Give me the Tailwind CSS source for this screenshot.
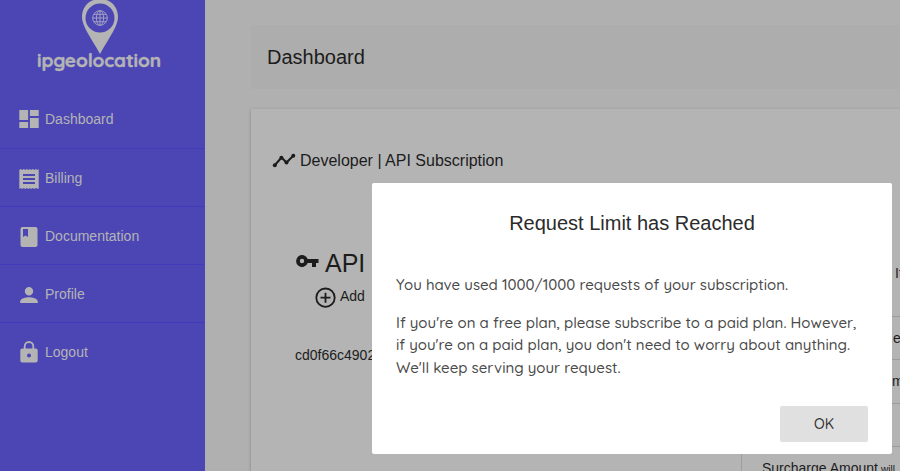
<!DOCTYPE html>
<html lang="en">
<head>
<meta charset="utf-8">
<title>Dashboard</title>
<script src="https://cdn.jsdelivr.net/npm/@tailwindcss/browser@4"></script>
</head>
<body class="relative flex h-[471px] w-[900px] overflow-hidden bg-[#b0b0b0] font-['Liberation_Sans',sans-serif] text-[#1c1c1c]">
<aside class="flex h-[471px] w-[205px] shrink-0 flex-col bg-[#4c46b5] text-[#b4b4b4]">
  <div class="flex h-[90px] shrink-0 flex-col items-center pr-[7px]">
    <svg class="block h-[54px] w-[40px] shrink-0 translate-x-[1px]" viewBox="0 0 40 54" fill="none">
      <path fill="#b4b4b4" fill-rule="evenodd" d="M20-1C9-1 2 7 2 17c0 9 8 19 18 37 10-18 18-28 18-37C38 7 31-1 20-1Zm0 4.500a14.500 14.500 0 1 1 0 29 14.500 14.500 0 0 1 0-29Z"/>
      <g stroke="#a09fc0" stroke-width="1"><circle cx="20" cy="18" r="7.300"/><ellipse cx="20" cy="18" rx="3.600" ry="7.300"/><path d="M20 10.700v14.600M12.700 18h14.600M14 14.300h12M14 21.700h12"/></g>
    </svg>
    <div class="-mt-[5px] whitespace-nowrap font-['Quicksand',sans-serif] text-[19px] leading-[22px] font-bold tracking-[-0.100px] [-webkit-text-stroke:0.400px_#b4b4b4]">ipgeolocation</div>
  </div>
  <nav class="flex flex-col text-[14px]">
    <a class="flex h-[59px] items-center gap-[4px] border-b border-[#413abb] pl-[17px]"><svg class="size-6" viewBox="0 0 24 24" fill="currentColor"><path d="M2.300 3h8.800v10H2.300zm0 12h8.800v6H2.300zM12.900 11h8.800v10h-8.800zm0-8h8.800v6h-8.800z"/></svg><span>Dashboard</span></a>
    <a class="flex h-[58px] items-center gap-[4px] border-b border-[#413abb] pt-[2px] pl-[17px]"><svg class="size-6" viewBox="0 0 24 24" fill="currentColor"><path d="M18 17H6v-2h12v2zm0-4H6v-2h12v2zm0-4H6V7h12v2zM2.300 22l1.500-1L5.300 22l1.500-1L8.300 22l1.500-1L11.300 22l1.500-1L14.300 22l1.500-1L17.300 22l1.500-1L21.700 22V2l-1.400 1L18.800 2l-1.500 1L15.800 2l-1.500 1L12.800 2l-1.500 1L9.800 2 8.300 3 6.800 2 5.300 3 3.800 2 2.300 3z"/></svg><span>Billing</span></a>
    <a class="flex h-[58px] items-center gap-[4px] border-b border-[#413abb] pt-[2px] pl-[17px]"><svg class="size-6" viewBox="0 0 24 24" fill="currentColor"><path d="M18.500 2h-13C4.400 2 3.500 2.900 3.500 4v16c0 1.100.900 2 2 2h13c1.100 0 2-.900 2-2V4c0-1.100-.900-2-2-2zM6 4h5v8l-2.500-1.500L6 12V4z"/></svg><span>Documentation</span></a>
    <a class="flex h-[58px] items-center gap-[4px] border-b border-[#413abb] pt-[2px] pl-[17px]"><svg class="size-6" viewBox="0 0 24 24" fill="currentColor"><path d="M12 12.500c2.200 0 4.200-1.800 4.200-4.200S14.200 4 12 4 7.800 5.900 7.800 8.300s2 4.200 4.200 4.200zm0 1.700c-3 0-8.800 1.300-8.800 4.200V20h17.600v-1.600c0-2.900-5.800-4.200-8.800-4.200z"/></svg><span>Profile</span></a>
    <a class="flex h-[58px] items-center gap-[4px] pl-[17px]"><svg class="size-6" viewBox="0 0 24 24" fill="currentColor"><path d="M18.700 8.500h-1.500V6.300a5.200 5.200 0 0 0-10.400 0v2.200H5.300c-1.100 0-2 .900-2 2v9.900c0 1.100.900 2 2 2h13.400c1.100 0 2-.900 2-2v-9.900c0-1.100-.900-2-2-2zM12 17.400a2 2 0 1 1 0-4 2 2 0 0 1 0 4zm3.400-8.900H8.600V6.300a3.400 3.400 0 0 1 6.800 0v2.200z"/></svg><span>Logout</span></a>
  </nav>
</aside>
<main class="flex min-w-0 flex-1 flex-col overflow-hidden pt-[25px] pl-[46px]">
  <header class="flex h-[64px] shrink-0 items-center bg-[#adadad] pl-[16px] text-[20px]">Dashboard</header>
  <section class="mt-[20px] flex h-[380px] w-[700px] shrink-0 bg-[#b4b4b4] shadow-[0_1px_3px_rgba(0,0,0,0.25)]">
    <div class="flex w-[490px] shrink-0 flex-col pt-[39px]">
      <div class="flex h-6 items-center pl-[21px] text-[16px]"><svg class="size-6" viewBox="0 0 24 24"><path d="m2.500 17.500 7-8 5 5 7-7" fill="none" stroke="currentColor" stroke-width="2"/><g fill="currentColor"><circle cx="2.800" cy="17.300" r="2"/><circle cx="9.400" cy="9.800" r="2"/><circle cx="14.500" cy="14.500" r="2"/><circle cx="21.300" cy="7.800" r="2"/></g></svg><span class="mt-[2px] ml-1">Developer | API Subscription</span></div>
      <div class="mt-[76px] flex h-[32px] items-center pl-[44px] text-[25px]"><svg class="-mt-[7px] size-6" viewBox="0 0 24 24" fill="currentColor"><path fill-rule="evenodd" d="M12.700 10a6 6 0 1 0 0 4H17v4h4v-4h2.500v-4H12.700zM7 14.200a2.200 2.200 0 1 1 0-4.400 2.200 2.200 0 0 1 0 4.400z"/></svg><span class="ml-[6px]">API Key</span></div>
      <div class="mt-[5px] flex h-6 items-center pl-[62px] text-[14px]"><svg class="size-6" viewBox="0 0 24 24" fill="none" stroke="currentColor" stroke-width="1.800"><circle cx="12.500" cy="12.700" r="9.200"/><path d="M12.500 7.700v10M7.500 12.700h10"/></svg><span class="-mt-[2px] ml-[3px]">Add</span></div>
      <div class="mt-[36px] pl-[44px] text-[14px] leading-[20px]">cd0f66c4902</div>
    </div>
    <div class="mt-[100px] flex flex-1 flex-col border-l border-[#9d9d9d] pt-[50px] text-[14px]">
      <div class="flex h-[58px] shrink-0 items-start border-b border-[#9b9b9b] pt-[4px] pl-[153px]">It</div>
      <div class="flex h-[43px] shrink-0 items-center border-b border-[#9b9b9b] pt-[1px] pl-[151px]">e</div>
      <div class="flex h-[44px] shrink-0 items-center border-b border-[#9b9b9b] pl-[150px]">m</div>
      <div class="h-[43px] shrink-0 border-b border-[#9b9b9b]"></div>
      <div class="flex h-[44px] items-baseline pt-[11px] pl-[20px] whitespace-nowrap">Surcharge Amount<span class="ml-[3px] text-[10px]">will</span></div>
    </div>
  </section>
</main>
<div role="dialog" class="absolute top-[183px] left-[372px] flex h-[271px] w-[520px] flex-col rounded-[2px] bg-white px-6">
  <h2 class="mt-[27px] text-center text-[20px] leading-[26px] text-[#2b2b2b]">Request Limit has Reached</h2>
  <div class="mt-[38px] font-['Quicksand',sans-serif] text-[15px] leading-[22.500px] font-medium whitespace-nowrap text-[#4a4a4a]">
    <p>You have used 1000/1000 requests of your subscription.</p>
    <p class="mt-[15px]">If you're on a free plan, please subscribe to a paid plan. However,</p>
    <p>if you're on a paid plan, you don't need to worry about anything.</p>
    <p>We'll keep serving your request.</p>
  </div>
  <button class="mt-[27px] h-[36px] w-[88px] shrink-0 self-end rounded-[2px] bg-[#e0e0e0] font-['Quicksand',sans-serif] text-[14px] font-medium text-[#333]">OK</button>
</div>
</body>
</html>
